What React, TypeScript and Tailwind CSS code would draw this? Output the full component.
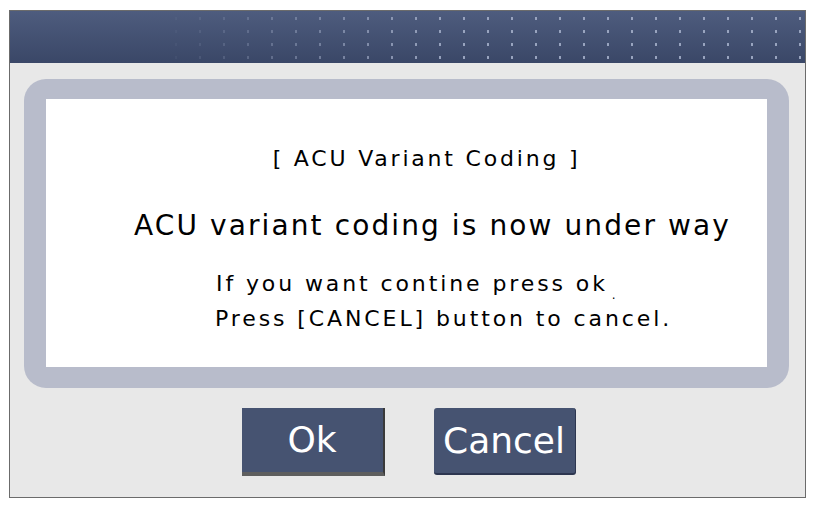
export default function App() {
	return (
		<div className="w-[815px] h-[506px] bg-white pt-[10px] pl-[9px]" style={{ fontFamily: '"DejaVu Sans", sans-serif' }}>
			<div className="w-[797px] h-[488px] border border-[#6b6b6b] bg-[#e8e8e8] flex flex-col">
				<div className="relative h-[52px] bg-gradient-to-b from-[#4e5c7e] to-[#3a4767]">
					<div className="absolute inset-0 bg-[radial-gradient(ellipse_1px_2px,#9aa5c0_70%,transparent_100%)] bg-[length:24px_13px] bg-[position:10px_1px] [mask-image:linear-gradient(to_right,transparent_18%,black_55%)]" />
				</div>

				<div className="mt-[16px] ml-[14px] mr-[16px] h-[309px] rounded-[22px] bg-[#b8bccb] px-[22px] pt-[20px] pb-[21px]">
					<div className="h-full bg-white flex flex-col items-center pl-[40px] pt-[47px] text-black">
						<div className="text-[22px] leading-[26px] tracking-[2.8px]">[ ACU Variant Coding ]</div>
						<div className="mt-[37px] ml-[12px] text-[28px] leading-[34px] tracking-[2.1px]">ACU variant coding is now under way</div>
						<div className="mt-[23px] self-start ml-[130px] text-[22px] leading-[35px] tracking-[2.9px]">
							<div className="h-[35px]">
								If you want contine press ok<span className="ml-[4px] align-[-8px] text-[12px] leading-none">.</span>
							</div>
							<div className="-ml-[1px]">Press [CANCEL] button to cancel.</div>
						</div>
					</div>
				</div>

				<div className="mt-[20px] flex justify-center gap-[49px] pl-[2px]">
					<button className="w-[143px] h-[68px] bg-[#465371] border-r-2 border-b-4 border-r-[#3a3a3a] border-b-[#5e5e5e] text-white text-[36px] leading-none">
						Ok
					</button>
					<button className="w-[142px] h-[67px] bg-[#465371] rounded-[3px] border-b-2 border-r border-[#2d3650] text-white text-[36px] leading-none">
						Cancel
					</button>
				</div>
			</div>
		</div>
	)
}
